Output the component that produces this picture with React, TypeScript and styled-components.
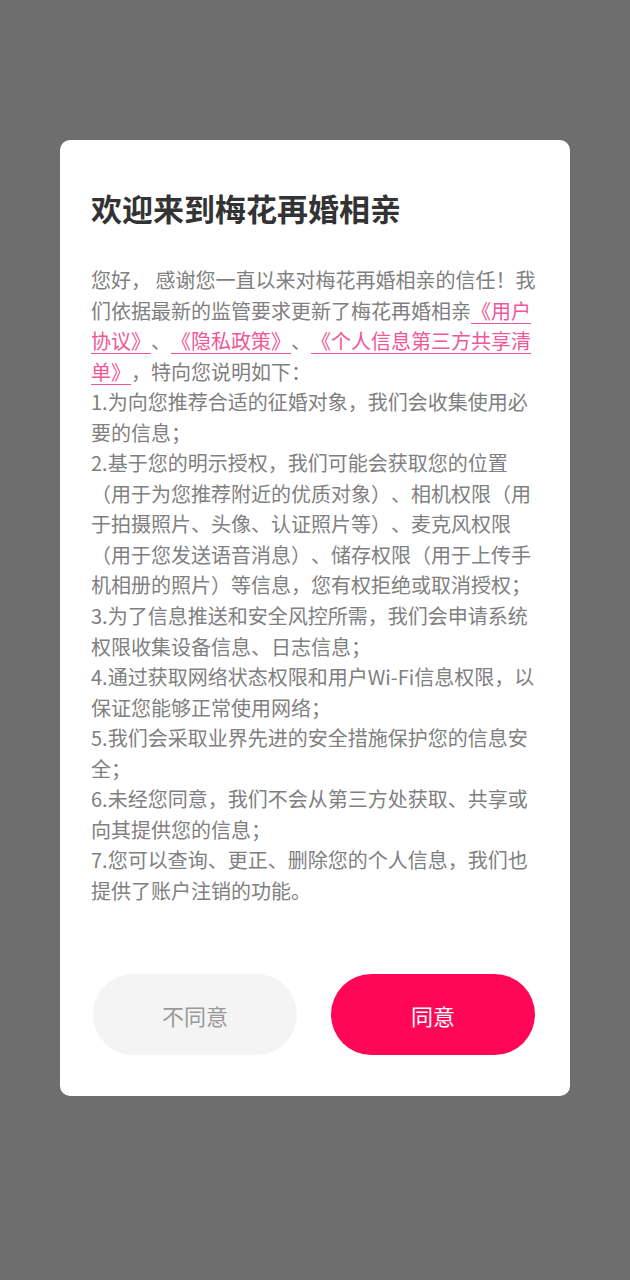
import React from "react";
import styled, { createGlobalStyle } from "styled-components";

const GlobalStyle = createGlobalStyle`
  html, body {
    margin: 0;
    padding: 0;
    background: #6e6e6e;
  }
  body {
    font-family: "Noto Sans CJK SC", "Noto Sans", sans-serif;
    text-spacing-trim: space-all;
  }
`;

const Screen = styled.div`
  width: 630px;
  height: 1280px;
  background: #6e6e6e;
  display: flex;
  justify-content: center;
  padding-top: 140px;
  box-sizing: border-box;
`;

const Dialog = styled.div`
  width: 510px;
  height: 956px;
  background: #fff;
  border-radius: 10px;
  padding: 46px 29px 41px 31px;
  box-sizing: border-box;
  display: flex;
  flex-direction: column;
`;

const Title = styled.h1`
  margin: 0;
  font-size: 31px;
  line-height: 43px;
  font-weight: 700;
  color: #333;
`;

const Body = styled.div`
  margin-top: 36px;
  font-size: 20px;
  line-height: 30.55px;
  color: #808080;
  flex: 1;
  text-spacing-trim: space-all;
`;

const Para = styled.p`
  margin: 0;
`;

const Link = styled.a`
  color: #f0569a;
  text-decoration: underline;
  text-underline-offset: 4px;
  text-decoration-thickness: 1px;
`;

const Buttons = styled.div`
  display: flex;
  gap: 34px;
  padding-left: 2px;
`;

const Button = styled.button<{ $primary?: boolean }>`
  width: 204px;
  height: 81px;
  border: none;
  border-radius: 41px;
  font-family: inherit;
  font-size: 22px;
  background: ${(p) => (p.$primary ? "#ff0756" : "#f4f4f4")};
  color: ${(p) => (p.$primary ? "#fff" : "#999")};
  cursor: pointer;
`;

const items = [
  "1.为向您推荐合适的征婚对象，我们会收集使用必要的信息；",
  "2.基于您的明示授权，我们可能会获取您的位置（用于为您推荐附近的优质对象）、相机权限（用于拍摄照片、头像、认证照片等）、麦克风权限（用于您发送语音消息）、储存权限（用于上传手机相册的照片）等信息，您有权拒绝或取消授权；",
  "3.为了信息推送和安全风控所需，我们会申请系统权限收集设备信息、日志信息；",
  "4.通过获取网络状态权限和用户Wi-Fi信息权限，以保证您能够正常使用网络；",
  "5.我们会采取业界先进的安全措施保护您的信息安全；",
  "6.未经您同意，我们不会从第三方处获取、共享或向其提供您的信息；",
  "7.您可以查询、更正、删除您的个人信息，我们也提供了账户注销的功能。",
];

export default function App() {
  return (
    <>
      <GlobalStyle />
      <Screen>
        <Dialog>
          <Title>欢迎来到梅花再婚相亲</Title>
          <Body>
            <Para>
              您好， 感谢您一直以来对梅花再婚相亲的信任！我们依据最新的监管要求更新了梅花再婚相亲
              <Link>《用户协议》</Link>、<Link>《隐私政策》</Link>、
              <Link>《个人信息第三方共享清单》</Link>，特向您说明如下：
            </Para>
            {items.map((t) => (
              <Para key={t}>{t}</Para>
            ))}
          </Body>
          <Buttons>
            <Button>不同意</Button>
            <Button $primary>同意</Button>
          </Buttons>
        </Dialog>
      </Screen>
    </>
  );
}
